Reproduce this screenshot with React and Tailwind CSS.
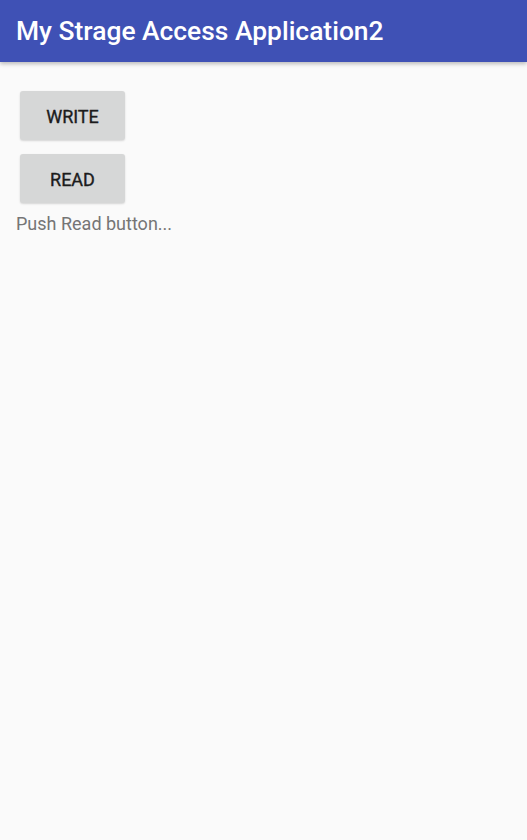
export default function App() {
  return (
    <div className="min-h-[840px] bg-[#fafafa] font-['Roboto',sans-serif]">
      <header className="flex h-[62px] items-center bg-[#3f51b5] px-4 shadow-[0_2px_4px_rgba(0,0,0,0.25)]">
        <h1 className="text-[26.4px] font-medium leading-none text-white">
          My Strage Access Application2
        </h1>
      </header>

      <div className="flex flex-col items-start pt-[29px] pl-4">
        <button className="ml-1 flex h-[49px] w-[105px] items-center justify-center rounded-[3px] bg-[#d6d7d7] pt-px text-[18px] font-normal text-[#1c1c1c] [-webkit-text-stroke:0.35px_#1c1c1c] shadow-[0_1px_2px_rgba(0,0,0,0.15)]">
          WRITE
        </button>
        <button className="ml-1 mt-[14px] flex h-[49px] w-[105px] items-center justify-center rounded-[3px] bg-[#d6d7d7] pt-px text-[18px] font-normal text-[#1c1c1c] [-webkit-text-stroke:0.35px_#1c1c1c] shadow-[0_1px_2px_rgba(0,0,0,0.15)]">
          READ
        </button>
        <p className="mt-[9px] text-[18px] leading-[24px] text-[#757575]">
          Push Read button...
        </p>
      </div>
    </div>
  );
}
